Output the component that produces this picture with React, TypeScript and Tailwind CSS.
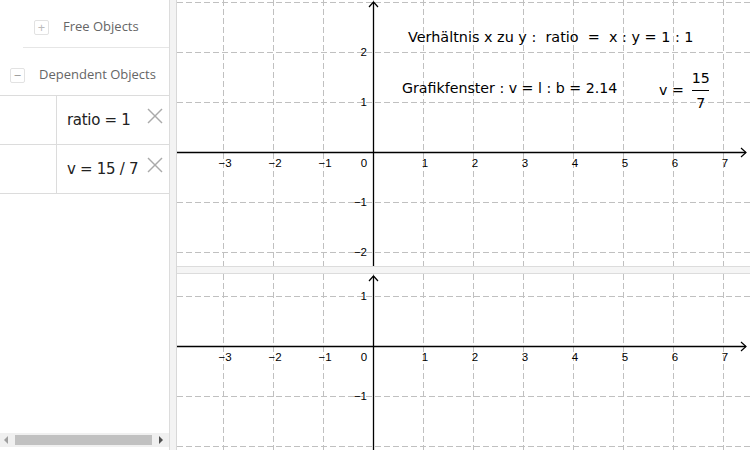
import React from "react";

const GRID = "#c0c0c0";

function Graph({ w, h, ox, oy, xs, ys }: { w: number; h: number; ox: number; oy: number; xs: number[]; ys: number[] }) {
  const vx: number[] = [];
  for (let k = -4; k <= 8; k++) {
    const x = ox + 50 * k;
    if (x > 0 && x < w) vx.push(x);
  }
  const hy: number[] = [];
  for (let k = -5; k <= 5; k++) {
    const y = oy - 50 * k;
    if (y >= 0 && y < h && k !== 0) hy.push(y);
  }
  return (
    <svg width={w} height={h} className="block" style={{ fontFamily: "'Liberation Sans', Arial, sans-serif" }}>
      {vx.map((x) => (
        <line key={"v" + x} x1={x + 0.5} y1={0} x2={x + 0.5} y2={h} stroke={GRID} strokeDasharray="6 3" strokeWidth={1} />
      ))}
      {hy.map((y) => (
        <line key={"h" + y} x1={0} y1={y + 0.5} x2={w} y2={y + 0.5} stroke={GRID} strokeDasharray="6 3" strokeWidth={1} />
      ))}
      <line x1={0} y1={oy + 0.5} x2={w - 4} y2={oy + 0.5} stroke="#000" strokeWidth={1.3} />
      <polyline points={`${w - 9},${oy - 4} ${w - 4},${oy + 0.5} ${w - 9},${oy + 5}`} fill="none" stroke="#000" strokeWidth={1.2} />
      <line x1={ox + 0.5} y1={2} x2={ox + 0.5} y2={h} stroke="#000" strokeWidth={1.3} />
      <polyline points={`${ox - 4},${7} ${ox + 0.5},${2} ${ox + 5},${7}`} fill="none" stroke="#000" strokeWidth={1.2} />
      {xs.map((k) => (
        <text key={"xl" + k} x={k === 0 ? ox - 9 : ox + 50 * k + 2} y={oy + 15} fontSize={11.5} textAnchor="middle" fill="#000">
          {k < 0 ? "\u2212" + Math.abs(k) : String(k)}
        </text>
      ))}
      {ys.map((k) => (
        <text key={"yl" + k} x={ox - 6} y={oy - 50 * k + 4} fontSize={11.5} textAnchor="end" fill="#000">
          {k < 0 ? "\u2212" + Math.abs(k) : String(k)}
        </text>
      ))}
    </svg>
  );
}

function XIcon() {
  return (
    <svg width="16" height="16" viewBox="0 0 16 16" className="block">
      <line x1="1" y1="1" x2="15" y2="15" stroke="#aaa" strokeWidth="1.4" />
      <line x1="15" y1="1" x2="1" y2="15" stroke="#aaa" strokeWidth="1.4" />
    </svg>
  );
}

export default function App() {
  const xs = [-3, -2, -1, 0, 1, 2, 3, 4, 5, 6, 7];
  const mathFont = { fontFamily: "'DejaVu Sans', sans-serif" };
  return (
    <div className="flex w-[750px] h-[450px] overflow-hidden bg-white" style={{ fontFamily: "'Open Sans', 'Liberation Sans', sans-serif" }}>
      {/* Left algebra panel */}
      <div className="relative w-[170px] h-full border-r border-[#dcdcdc] flex flex-col">
        <div className="ml-[23px] h-[48px] pt-[7px] border-b border-[#e6e6e6] flex items-center">
          <div className="ml-[11px] w-[15px] h-[15px] border border-[#e2e2e2] rounded-[2px] flex items-center justify-center text-[#bbb] text-[13px] leading-none">+</div>
          <span className="ml-[14px] text-[13px] text-[#666]">Free Objects</span>
        </div>
        <div className="h-[48px] pt-[7px] border-b border-[#dcdcdc] flex items-center">
          <div className="ml-[10px] w-[15px] h-[15px] border border-[#e2e2e2] rounded-[2px] flex items-center justify-center text-[#999] text-[13px] leading-none">−</div>
          <span className="ml-[14px] text-[13px] text-[#666]">Dependent Objects</span>
        </div>
        <div className="h-[49px] border-b border-[#dcdcdc] flex">
          <div className="w-[57px] border-r border-[#dcdcdc]" />
          <div className="relative flex-1 flex items-center pl-[10px] pt-[1px] text-[15px] text-[#222]" style={mathFont}>
            <span className="tracking-[-0.3px]">ratio = 1</span>
            <div className="absolute right-[6px] top-[12px]"><XIcon /></div>
          </div>
        </div>
        <div className="h-[49px] border-b border-[#dcdcdc] flex">
          <div className="w-[57px] border-r border-[#dcdcdc]" />
          <div className="relative flex-1 flex items-center pl-[10px] pt-[1px] text-[15px] text-[#222]" style={mathFont}>
            <span className="tracking-[-0.3px]">v = 15 / 7</span>
            <div className="absolute right-[6px] top-[12px]"><XIcon /></div>
          </div>
        </div>
        <div className="flex-1" />
        <div className="h-[14px] mb-[3px] bg-[#f0f0f0] flex items-center">
          <svg width="15" height="14" viewBox="0 0 15 14" className="block"><polygon points="8,3 4,7 8,11" fill="#a0a0a0" /></svg>
          <div className="flex-1 h-[10px] bg-[#c1c1c1]" />
          <svg width="17" height="14" viewBox="0 0 17 14" className="block"><polygon points="7,3 11,7 7,11" fill="#505050" /></svg>
        </div>
      </div>
      {/* Splitter */}
      <div className="w-[7px] h-full bg-[#f3f3f3] border-r border-[#d8d8d8]" />
      {/* Graphics views */}
      <div className="flex-1 flex flex-col">
        <div className="relative h-[266px]">
          <Graph w={573} h={266} ox={196} oy={152} xs={xs} ys={[2, 1, -1, -2]} />
          <div className="absolute left-[231px] top-[27px] text-black whitespace-nowrap text-[14.4px]" style={mathFont}>
            Verhältnis x zu y :&nbsp; ratio&nbsp; =&nbsp; x : y = 1 : 1
          </div>
          <div className="absolute left-[225px] top-[78px] text-black whitespace-nowrap text-[14.2px]" style={mathFont}>
            Grafikfenster : v = l : b = 2.14
          </div>
          <div className="absolute left-[482px] top-[70px] flex items-center text-black text-[14.2px]" style={mathFont}>
            <span>v&nbsp;=</span>
            <div className="ml-[8px] flex flex-col items-center leading-[16px]">
              <span>15</span>
              <div className="w-[17px] h-[1px] bg-black my-[4px]" />
              <span>7</span>
            </div>
          </div>
        </div>
        <div className="h-[8px] bg-[#f5f5f5] border-y border-[#dcdcdc]" />
        <div className="flex-1">
          <Graph w={573} h={176} ox={196} oy={72} xs={xs} ys={[1, -1]} />
        </div>
      </div>
    </div>
  );
}
